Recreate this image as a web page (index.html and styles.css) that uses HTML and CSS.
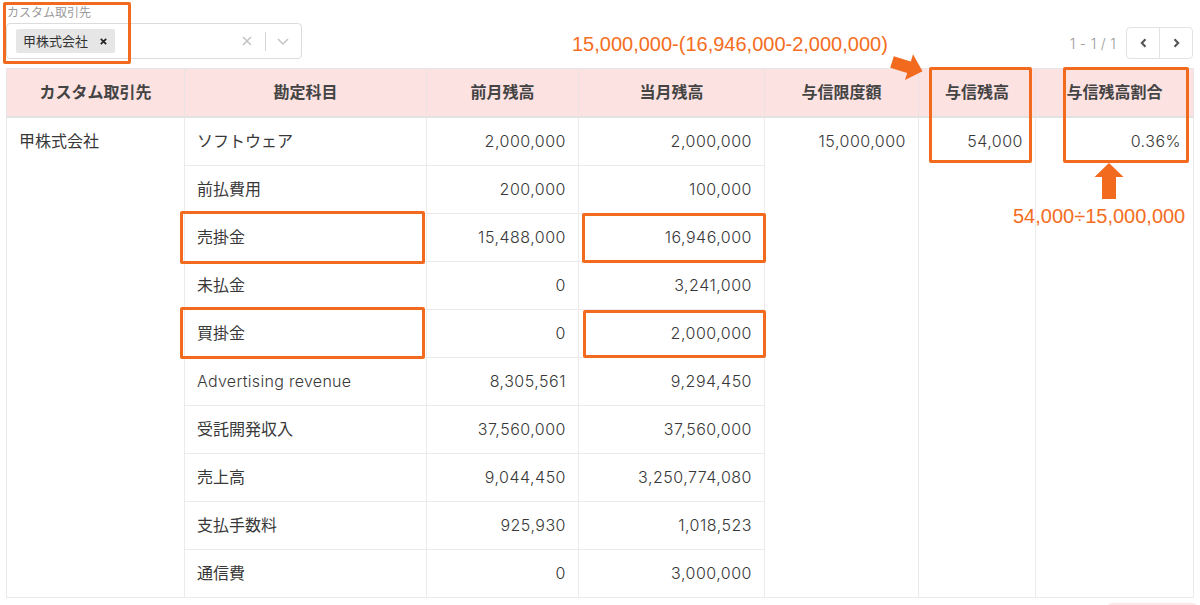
FILE: index.html
```html
<!DOCTYPE html>
<html lang="ja">
<head>
<meta charset="utf-8">
<title>与信残高</title>
<link rel="stylesheet" href="styles.css">
</head>
<body>
<div class="page">
  <div class="toolbar">
    <div class="filter">
      <div class="filter-label">カスタム取引先</div>
      <div class="select">
        <div class="tag">
          <span class="tag-text">甲株式会社</span>
          <svg class="tag-x" width="7" height="7" viewBox="0 0 7 7"><path d="M0.8 0.8L6.2 6.2M6.2 0.8L0.8 6.2" stroke="#222" stroke-width="1.7"/></svg>
        </div>
        <div class="select-icons">
          <svg class="clear" width="10" height="10" viewBox="0 0 10 10"><path d="M1 1L9 9M9 1L1 9" stroke="#c4c4c4" stroke-width="1.6"/></svg>
          <span class="sep"></span>
          <svg class="chev" width="12" height="7" viewBox="0 0 12 7"><path d="M1 1l5 5 5-5" fill="none" stroke="#c4c4c4" stroke-width="1.5"/></svg>
        </div>
      </div>
    </div>
    <div class="pager">
      <span class="pager-text">1 - 1 / 1</span>
      <div class="pager-btns">
        <span class="pbtn"><svg width="7" height="10" viewBox="0 0 7 10"><path d="M5.5 1.2L1.8 5l3.7 3.8" fill="none" stroke="#555" stroke-width="2.1"/></svg></span>
        <span class="pbtn"><svg width="7" height="10" viewBox="0 0 7 10"><path d="M1.5 1.2L5.2 5 1.5 8.8" fill="none" stroke="#555" stroke-width="2.1"/></svg></span>
      </div>
    </div>
  </div>

  <table class="grid">
    <colgroup>
      <col class="c1"><col class="c2"><col class="c3"><col class="c4"><col class="c5"><col class="c6"><col class="c7">
    </colgroup>
    <thead>
      <tr>
        <th>カスタム取引先</th>
        <th>勘定科目</th>
        <th>前月残高</th>
        <th>当月残高</th>
        <th>与信限度額</th>
        <th>与信残高</th>
        <th>与信残高割合</th>
      </tr>
    </thead>
    <tbody>
      <tr>
        <td rowspan="10" class="span">甲株式会社</td>
        <td>ソフトウェア</td><td class="num">2,000,000</td><td class="num">2,000,000</td>
        <td rowspan="10" class="span num">15,000,000</td>
        <td rowspan="10" class="span num">54,000</td>
        <td rowspan="10" class="span num">0.36%</td>
      </tr>
      <tr><td>前払費用</td><td class="num">200,000</td><td class="num">100,000</td></tr>
      <tr><td>売掛金</td><td class="num">15,488,000</td><td class="num">16,946,000</td></tr>
      <tr><td>未払金</td><td class="num">0</td><td class="num">3,241,000</td></tr>
      <tr><td>買掛金</td><td class="num">0</td><td class="num">2,000,000</td></tr>
      <tr><td class="latin">Advertising revenue</td><td class="num">8,305,561</td><td class="num">9,294,450</td></tr>
      <tr><td>受託開発収入</td><td class="num">37,560,000</td><td class="num">37,560,000</td></tr>
      <tr><td>売上高</td><td class="num">9,044,450</td><td class="num">3,250,774,080</td></tr>
      <tr><td>支払手数料</td><td class="num">925,930</td><td class="num">1,018,523</td></tr>
      <tr><td>通信費</td><td class="num">0</td><td class="num">3,000,000</td></tr>
    </tbody>
  </table>

  <div class="footer"><div class="pill"></div></div>

  <!-- annotations -->
  <div class="mark mark-filter"></div>
  <div class="mark mark-credit"></div>
  <div class="mark mark-ratio"></div>
  <div class="mark mark-ar"></div>
  <div class="mark mark-ar-val"></div>
  <div class="mark mark-ap"></div>
  <div class="mark mark-ap-val"></div>
  <div class="note note-formula">15,000,000-(16,946,000-2,000,000)</div>
  <div class="note note-ratio">54,000÷15,000,000</div>
  <svg class="arrows" width="1200" height="605" viewBox="0 0 1200 605">
    <polygon points="893.8,56.3 910.8,61.5 913,54.3 922.5,71.2 905,80.1 907.2,72.9 890.2,67.7" fill="#f26a1e"/>
    <polygon points="1109,163 1123.5,177 1116,177 1116,199 1102,199 1102,177 1094.5,177" fill="#f26a1e"/>
  </svg>
</div>
</body>
</html>
```
FILE: styles.css
```css
html, body {
  margin: 0;
  padding: 0;
  background: #fff;
  overflow: hidden;
}
body {
  font-family: Inter, "Noto Sans CJK JP", sans-serif;
  color: #333;
}
.page {
  position: relative;
  width: 1200px;
  height: 605px;
}
.toolbar {
  height: 68px;
  box-sizing: border-box;
  padding: 0 7px 9px 6px;
  display: flex;
  justify-content: space-between;
  align-items: flex-end;
}
.filter {
  display: flex;
  flex-direction: column;
}
.filter-label {
  font-size: 12px;
  line-height: 16px;
  color: #9a9a9a;
  margin-left: 1px;
  margin-bottom: 2px;
}
.select {
  width: 296px;
  height: 36px;
  box-sizing: border-box;
  border: 1px solid #dcdcdc;
  border-radius: 4px;
  display: flex;
  align-items: center;
  justify-content: space-between;
  padding: 0 12px 0 9px;
}
.tag {
  height: 24px;
  background: #e6e6e6;
  border-radius: 2px;
  display: flex;
  align-items: center;
  padding: 0 8px 0 7px;
  box-sizing: border-box;
}
.tag-text {
  font-size: 13px;
  line-height: 24px;
  color: #333;
}
.tag-x {
  margin-left: 12px;
}
.select-icons {
  display: flex;
  align-items: center;
}
.clear {
  margin-right: 13px;
}
.sep {
  width: 1px;
  height: 19px;
  background: #d4d4d4;
}
.chev {
  margin-left: 11px;
}
.pager {
  display: flex;
  align-items: center;
}
.pager-text {
  font-size: 14px;
  font-weight: 300;
  color: #999;
  margin-right: 10px;
  letter-spacing: 0.3px;
}
.pager-btns {
  display: flex;
  border: 1px solid #e3e3e3;
  border-radius: 4px;
  height: 32px;
  box-sizing: border-box;
}
.pbtn {
  width: 32px;
  display: flex;
  align-items: center;
  justify-content: center;
}
.pbtn + .pbtn {
  border-left: 1px solid #e3e3e3;
}

.grid {
  margin-left: 6px;
  width: 1187px;
  table-layout: fixed;
  border-collapse: separate;
  border-spacing: 0;
  border-top: 1px solid #e6e6e6;
  border-left: 1px solid #e6e6e6;
  font-size: 16px;
}
.c1 { width: 178px; }
.c2 { width: 242px; }
.c3 { width: 152px; }
.c4 { width: 186px; }
.c5 { width: 154px; }
.c6 { width: 117px; }
.c7 { width: 158px; }
.grid th {
  background: #fde2e2;
  font-weight: bold;
  color: #444;
  text-align: center;
  padding: 12px 12px;
  line-height: 23px;
  border-right: 1px solid #ebe3e3;
  border-bottom: 2px solid #e2e2e2;
}
.grid td {
  padding: 12px 12px;
  line-height: 23px;
  border-right: 1px solid #ebebeb;
  border-bottom: 1px solid #ebebeb;
  white-space: nowrap;
  vertical-align: middle;
  color: #383838;
}
.grid td.span {
  vertical-align: top;
}
.grid td.num {
  text-align: right;
  font-weight: 300;
  letter-spacing: 0.5px;
}
.grid td.latin {
  font-weight: 300;
  letter-spacing: 0.3px;
}
.footer {
  margin-top: 5px;
  display: flex;
  justify-content: flex-end;
}
.pill {
  width: 95px;
  height: 20px;
  background: #fde6e6;
  border-radius: 8px 8px 0 0;
}

.mark {
  position: absolute;
  box-sizing: border-box;
  border: 3px solid #f26a1e;
  border-radius: 2px;
}
.mark-filter { left: 3px; top: 2px; width: 128px; height: 62px; }
.mark-credit { left: 929px; top: 67px; width: 103px; height: 96px; }
.mark-ratio { left: 1063px; top: 67px; width: 126px; height: 96px; }
.mark-ar { left: 180px; top: 211px; width: 245px; height: 53px; }
.mark-ar-val { left: 582px; top: 213px; width: 184px; height: 50px; }
.mark-ap { left: 180px; top: 307px; width: 245px; height: 52px; }
.mark-ap-val { left: 583px; top: 310px; width: 183px; height: 48px; }
.note {
  position: absolute;
  font-family: "Liberation Sans", Arial, sans-serif;
  font-size: 20px;
  line-height: 23px;
  color: #f46d22;
  white-space: nowrap;
}
.note-formula { left: 572px; top: 33px; }
.note-ratio { left: 1013px; top: 205px; }
.arrows {
  position: absolute;
  left: 0;
  top: 0;
  pointer-events: none;
}
```
